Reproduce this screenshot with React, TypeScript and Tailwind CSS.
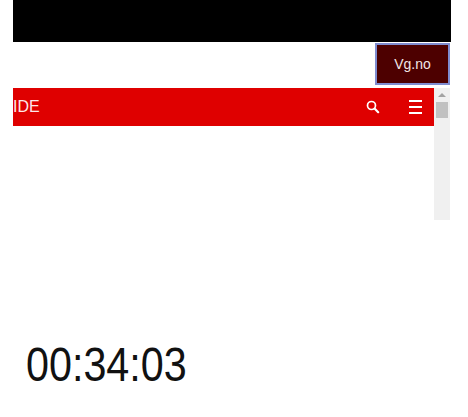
export default function App() {
    return (
        <div className="w-[468px] h-[417px] overflow-hidden bg-white font-['Liberation_Sans',Arial,sans-serif]">
            <div className="ml-[13px] w-[438px] h-[42px] bg-black" />

            <div className="flex justify-end pr-[18px] pt-px">
                <button className="w-[75px] h-[42px] bg-[#4d0000] border-2 border-[#7f8cd0] text-[14px] text-[#f2e6e6]">
                    Vg.no
                </button>
            </div>

            <div className="flex items-start ml-[13px] mt-[3px]">
                <div className="w-[421px] h-[38px] bg-[#df0000] flex items-center justify-between text-white">
                    <span className="text-[16px] text-[#fde8e8]">IDE</span>
                    <div className="flex items-center gap-[29px] pr-3">
                        <svg className="w-[14px] h-[14px]" viewBox="0 0 14 14" fill="none" stroke="currentColor">
                            <circle cx="5.5" cy="5.5" r="4" strokeWidth="1.7" />
                            <path d="M8.8 8.8l3.4 3.4" strokeWidth="2.2" strokeLinecap="round" />
                        </svg>
                        <div className="w-[13px] flex flex-col gap-1">
                            <div className="h-0.5 bg-white" />
                            <div className="h-0.5 bg-white" />
                            <div className="h-0.5 bg-white" />
                        </div>
                    </div>
                </div>

                <div className="w-4 h-[132px] bg-[#f0f0f0] flex flex-col items-center pt-[5px]">
                    <div className="w-0 h-0 border-x-[4px] border-x-transparent border-b-[4px] border-b-[#a3a3a3]" />
                    <div className="w-3 h-4 mt-[5px] bg-[#c1c1c1]" />
                </div>
            </div>

            <div className="mt-[121px] ml-[26px] w-[162px] h-[48px] text-[48px] leading-[48px] text-[#111111] whitespace-nowrap origin-left scale-x-[0.86]">
                00:34:03
            </div>
        </div>
    );
}
